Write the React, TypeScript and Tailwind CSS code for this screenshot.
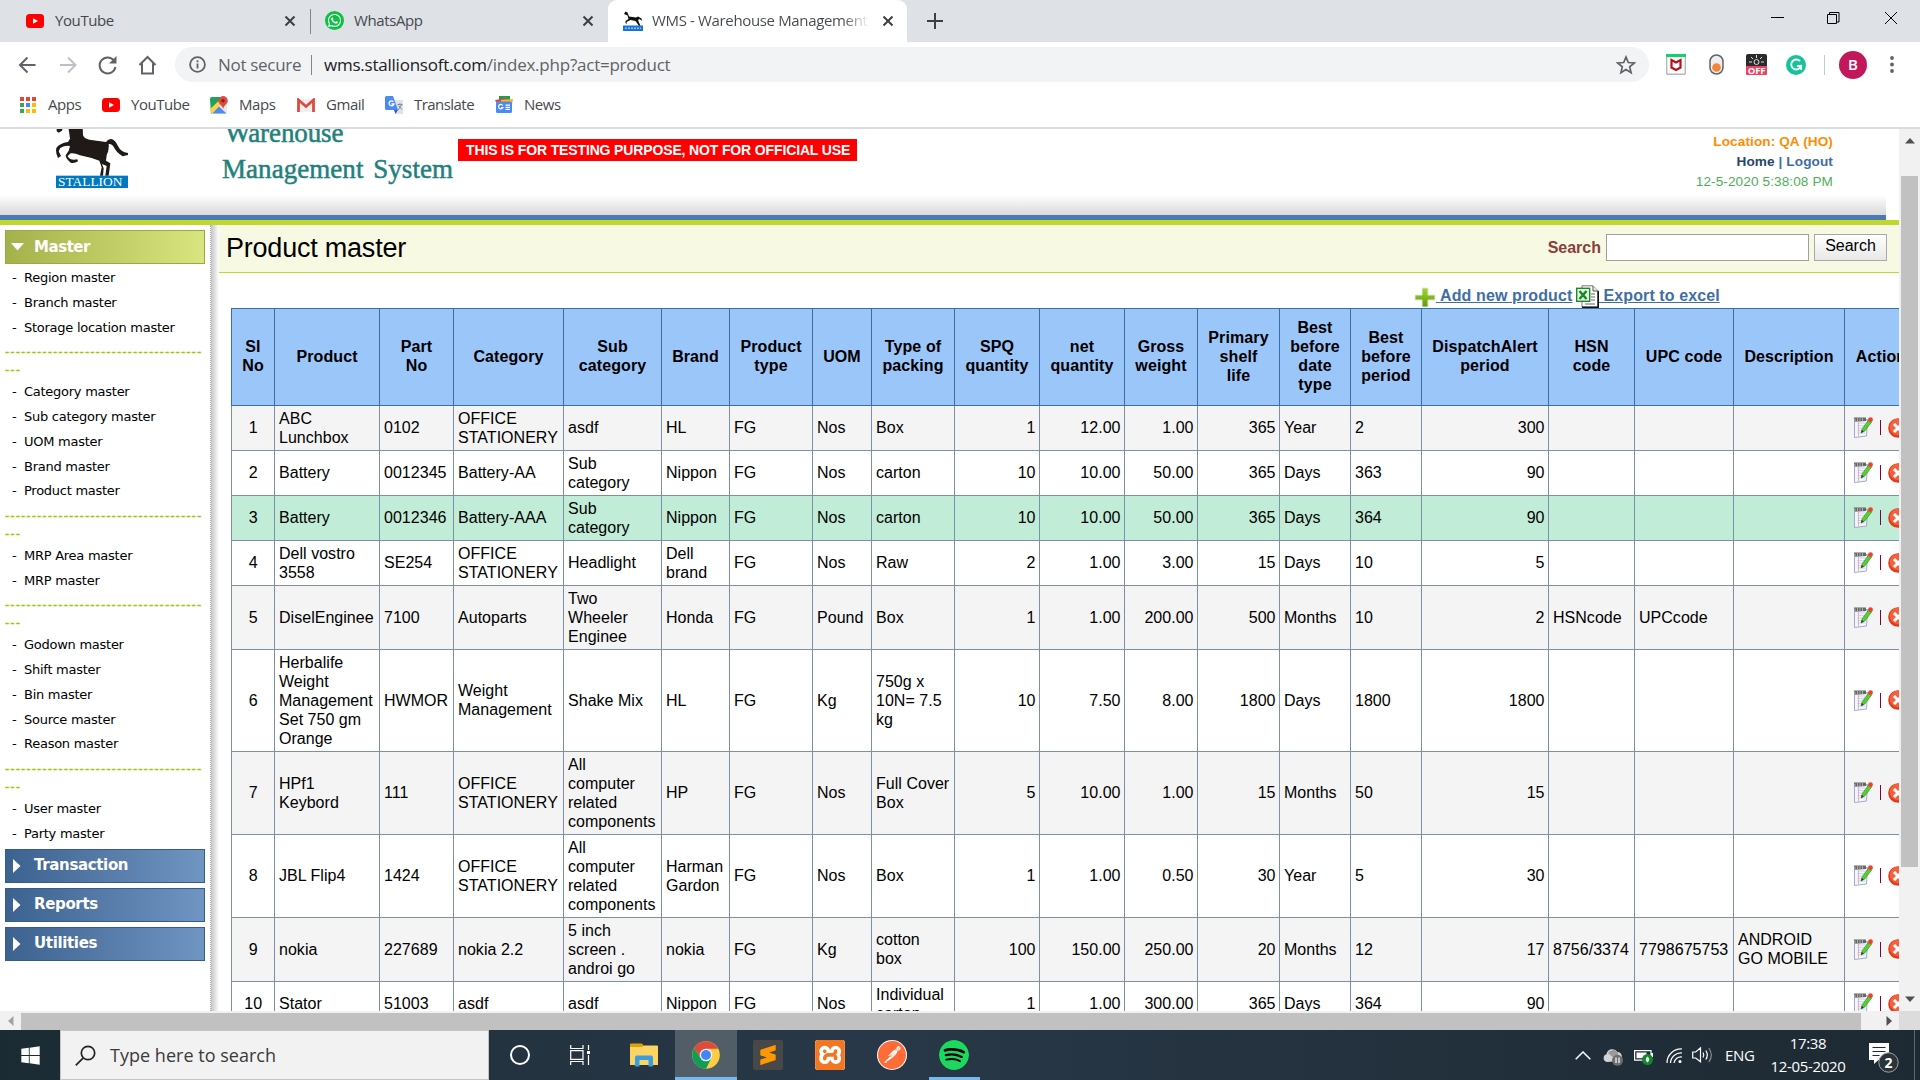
import React from "react";
import { FaWindows, FaWhatsapp } from "react-icons/fa";
import { SiSublimetext, SiXampp, SiPostman, SiSpotify } from "react-icons/si";

const UI = "font-['Open_Sans','Noto_Sans',sans-serif]";

/* ---------- small drawings ---------- */

function YouTubeIcon() {
  return (
    <svg width="18" height="14" viewBox="0 0 18 14">
      <rect width="18" height="14" rx="3.5" fill="#f00" />
      <path d="M7 4.2v5.6L12 7z" fill="#fff" />
    </svg>
  );
}

const HORSE =
  "M205 20H248L249 46Q254 57 268 59L318 66Q326 55 337 58Q346 62 354 78Q362 96 384 99V105L368 109Q350 98 343 84Q336 70 326 72Q328 90 320 106L318 122L331 130L326 167H316L320 138L306 132L311 145L309 167H300L305 142L298 122Q270 112 240 106Q224 98 212 100L203 108Q208 122 232 118L234 124Q222 132 212 128Q198 118 197 106L206 92L210 78Q194 76 181 84L176 94L183 108L174 114Q166 100 169 84Q178 70 204 66L210 56ZM170 20H190L186 32L176 38L170 34Z";

function StallionLogo() {
  return (
    <svg width="72" height="59" viewBox="168 27 216 177">
      <path d={HORSE} fill="#1f1a17" />
      <rect x="168" y="167" width="216" height="37" fill="#0079c1" />
      <text x="174" y="198" textLength="193" lengthAdjust="spacingAndGlyphs" fontSize="38" fontFamily="Liberation Serif, serif" fill="#fff">
        STALLION
      </text>
    </svg>
  );
}

function StallionFavicon() {
  return (
    <svg width="20" height="20" viewBox="0 0 20 20">
      <path d="M1 3L2.500 .5l2 1 1.500 4 7 1 2-1 3.500 2 .5 2.500-2.500-2-1.500 1 2.500 6h-1.500l-3.500-5-5-1-4 2 .5 2-1.500-1V10l3-2-1-3.500z" fill="#111" />
      <rect y="14.500" width="20" height="5.500" fill="#1a73d9" />
      <path d="M2 17.300h16" stroke="#8fc0f5" strokeWidth="1.500" strokeDasharray="2 1" />
    </svg>
  );
}

function CloseX() {
  return (
    <svg width="12" height="12" viewBox="0 0 12 12">
      <path d="M1.500 1.500l9 9M10.500 1.500l-9 9" stroke="#3c4043" strokeWidth="2" />
    </svg>
  );
}

function EditIcon() {
  return (
    <svg width="20" height="21" viewBox="0 0 20 21" className="shrink-0">
      <path d="M1.500 3L14.500 2.500 13.500 19 1.500 20.500z" fill="#f4f6fd" stroke="#9aa0cf" strokeWidth="0.9" />
      <path d="M4.500 6h8M4.300 8.500h8M4.300 11h7M4.300 13.500h7M4.300 16h8" stroke="#c4cbe8" strokeWidth="0.8" />
      <path d="M5.500 5v14.500" stroke="#eda0a0" strokeWidth="0.8" />
      <path d="M.8 .5h12l.5 3.500-11.500.8z" fill="#666" />
      <path d="M2 1.500v3M4.500 1v3.500M7 1v3M9.500 1v3" stroke="#ccc" strokeWidth="0.7" />
      <path d="M8 16l1.200-4.300L15.800 2.800l2.800 2.200-6.800 9z" fill="#5ecb34" stroke="#2d9a1c" strokeWidth="0.7" />
      <path d="M8 16l.8-3 2 1.600z" fill="#333" />
      <circle cx="17.500" cy="2.700" r="2.400" fill="#e8432c" />
    </svg>
  );
}

function DeleteIcon() {
  return (
    <svg width="20" height="20" viewBox="0 0 20 20" className="shrink-0">
      <circle cx="10" cy="10" r="9.800" fill="#e23a1c" />
      <circle cx="10" cy="9" r="8.300" fill="#f5603f" />
      <path d="M6 6l8 8M14 6l-8 8" stroke="#fff" strokeWidth="3" />
    </svg>
  );
}

function PlusIcon() {
  return (
    <svg width="22" height="21" viewBox="0 0 22 21">
      <defs>
        <linearGradient id="plusFill" x1="0" y1="0" x2="0" y2="1">
          <stop offset="0" stopColor="#a4d42c" />
          <stop offset="1" stopColor="#5c9c10" />
        </linearGradient>
      </defs>
      <path d="M8 1h6v7h7v5h-7v7H8v-7H1V8h7z" fill="url(#plusFill)" stroke="#e4e8dc" strokeWidth="1" />
    </svg>
  );
}

function ExcelIcon() {
  return (
    <svg width="23" height="23" viewBox="0 0 23 23">
      <path d="M6 .8h11l5 5v16.400H6z" fill="#fff" stroke="#777" strokeWidth="1" />
      <path d="M6 22.200h16.200V6" fill="none" stroke="#111" strokeWidth="1.600" />
      <path d="M17 1v5h5" fill="#eee" stroke="#555" strokeWidth="1" />
      <path d="M9 19h10M15 9h4M15 12h4M15 15h4" stroke="#9a9a9a" strokeWidth="1.300" />
      <rect x=".7" y="3.300" width="13" height="13" fill="#e9f5e6" stroke="#1a8a28" strokeWidth="1.400" />
      <path d="M3.500 6l7 8M10.500 6l-7 8" stroke="#138a22" strokeWidth="2.500" />
    </svg>
  );
}

function ChromeIcon() {
  return (
    <svg width="28" height="28" viewBox="0 0 28 28">
      <circle cx="14" cy="14" r="13.800" fill="#ffcd40" />
      <path d="M14 .2A13.800 13.800 0 0 1 26 7.800H14L8.600 17 2.050 7.100A13.800 13.800 0 0 1 14 .2z" fill="#dd4b3e" />
      <path d="M2.050 7.100A13.800 13.800 0 0 0 14 27.800L19.400 17.100 8.600 17.100z" fill="#0f9d58" />
      <circle cx="14" cy="14" r="6.300" fill="#f1f1f1" />
      <circle cx="14" cy="14" r="5" fill="#4285f4" />
    </svg>
  );
}

/* ---------- browser chrome ---------- */

function TabStrip() {
  return (
    <div className={`flex h-[42px] w-full shrink-0 items-center bg-[#dee1e6] text-[15px] tracking-[-0.4px] text-[#45494d] ${UI}`}>
      <div className="flex h-full w-[310px] items-center pb-px pl-[26px]">
        <YouTubeIcon />
        <span className="ml-[11px] w-[229px]">YouTube</span>
        <CloseX />
      </div>
      <div className="h-[25px] w-px bg-[#80868b]" />
      <div className="flex h-full w-[297px] items-center pb-px pl-[14px]">
        <span className="flex size-[19px] items-center justify-center rounded-full bg-[#0cc143] text-white">
          <FaWhatsapp size={15} />
        </span>
        <span className="ml-[10px] w-[228px]">WhatsApp</span>
        <CloseX />
      </div>
      <div className="flex h-full w-[299px] items-center rounded-t-[9px] bg-white pb-px pl-[15px]">
        <StallionFavicon />
        <span className="ml-[9px] w-[217px] overflow-hidden whitespace-nowrap bg-linear-to-r from-[#45494d] from-88% to-transparent bg-clip-text tracking-[-0.35px] text-transparent">
          WMS - Warehouse Management
        </span>
        <span className="ml-[13px]">
          <CloseX />
        </span>
      </div>
      <svg className="ml-5" width="16" height="16" viewBox="0 0 16 16">
        <path d="M8 0v16M0 8h16" stroke="#3c4043" strokeWidth="2" />
      </svg>
      <div className="ml-auto flex items-center pr-[22px] pb-1.5">
        <svg width="128" height="14" viewBox="0 0 128 14" fill="none" stroke="#000" strokeWidth="1">
          <path d="M1 6.500h13" />
          <path d="M57.500 3.500h9v9h-9zM59.500 3v-1.500h9.500v9.500h-2" />
          <path d="M115 1l12 12M127 1l-12 12" />
        </svg>
      </div>
    </div>
  );
}

function Toolbar() {
  return (
    <div className={`flex h-[45px] w-full shrink-0 items-center bg-white ${UI}`}>
      <svg width="175" height="24" viewBox="0 0 175 24" fill="none" stroke="#5f6368" strokeWidth="2">
        <path d="M35.500 12H20.500M27.500 4.500L20 12l7.500 7.500" />
        <path d="M60 12h15M68 4.500l7.500 7.500-7.500 7.500" stroke="#bdc1c6" />
        <path d="M114 7.500A8 8 0 1 0 115.500 14" />
        <path d="M116.500 3v7.500h-7.500z" fill="#5f6368" stroke="none" />
        <path d="M139.500 12l8-8 8 8M142 10.500V20.500h11V10.500" />
      </svg>
      <div className="flex h-[35px] w-[1474px] items-center rounded-full bg-[#f1f3f4] pl-[14px] text-[17px] tracking-[-0.3px] whitespace-nowrap">
        <svg width="17" height="17" viewBox="0 0 17 17">
          <circle cx="8.500" cy="8.500" r="7.400" fill="none" stroke="#5f6368" strokeWidth="1.800" />
          <path d="M8.500 7.500v5M8.500 4.300v2" stroke="#5f6368" strokeWidth="1.800" />
        </svg>
        <span className="ml-3 w-[93px] text-[#5f6368]">Not secure</span>
        <span className="mr-[12px] h-[20px] w-px bg-[#80868b]" />
        <span className="tracking-[-0.23px] text-[#5f6368]">
          <span className="text-[#202124]">wms.stallionsoft.com</span>/index.php?act=product
        </span>
        <svg className="mr-[13px] ml-auto" width="20" height="20" viewBox="0 0 20 20">
          <path d="M10 2l2.300 5.500 6 .5-4.600 3.900 1.400 5.800L10 14.600l-5.100 3.100 1.400-5.800L1.700 8l6-.5z" fill="none" stroke="#5f6368" strokeWidth="1.700" />
        </svg>
      </div>
      <div className="flex items-center">
        <svg className="ml-[17px]" width="20" height="21" viewBox="0 0 20 21">
          <rect x=".7" y=".7" width="18.600" height="19.600" rx="1" fill="#fff" stroke="#b8b8b8" strokeWidth="1.400" />
          <path d="M0 0h20v3H0z" fill="#0fd46a" />
          <path d="M5.500 6l4.500 2.500L14.500 6v7.500L10 16l-4.500-2.500z" fill="#fff" stroke="#b5121b" strokeWidth="2.200" />
        </svg>
        <svg className="ml-[23px]" width="15" height="21" viewBox="0 0 15 21">
          <rect x="1" y="1" width="13" height="19" rx="6.500" fill="#eee" stroke="#5f6368" strokeWidth="1.500" />
          <circle cx="7.500" cy="13.500" r="4.300" fill="#f58536" />
        </svg>
        <span className="ml-[22px] flex h-[21px] w-[21px] flex-col items-center overflow-hidden rounded-[2px] bg-[#2b2b2b]">
          <svg width="21" height="12" viewBox="0 0 21 12" fill="none" stroke="#ddd" strokeWidth="1" className="shrink-0">
            <circle cx="10.500" cy="8" r="2.500" />
            <path d="M10.500 1v3M3 8h3M15 8h3M5 3l2 2M16 3l-2 2" />
          </svg>
          <span className="h-[9px] w-full bg-[#f5405f] text-center text-[9.5px] leading-[9px] font-bold tracking-[-0.2px] text-white">OFF</span>
        </span>
        <span className="ml-[19px] flex size-5 items-center justify-center rounded-full bg-[#15c39a]">
          <svg width="14" height="14" viewBox="0 0 14 14" fill="none" stroke="#fff" strokeWidth="1.800">
            <path d="M11 3.200A5 5 0 1 0 12 8H8M12.200 6.800V12" />
          </svg>
        </span>
        <span className="ml-[18px] h-[20px] w-px bg-[#c6c9cc]" />
        <span className="ml-[14px] flex size-[28px] items-center justify-center rounded-full bg-[#c2185b] text-[15px] font-semibold text-white">B</span>
        <svg className="ml-[23px]" width="4" height="17" viewBox="0 0 4 17" fill="#5f6368">
          <circle cx="2" cy="2" r="1.900" />
          <circle cx="2" cy="8.500" r="1.900" />
          <circle cx="2" cy="15" r="1.900" />
        </svg>
      </div>
    </div>
  );
}

function BookmarksBar() {
  return (
    <div className={`flex h-[42px] w-full shrink-0 items-center border-b-2 border-[#dadce0] bg-white pb-[5px] pl-5 text-[15px] tracking-[-0.45px] whitespace-nowrap text-[#45494d] ${UI}`}>
      <svg width="16" height="16" viewBox="0 0 16 16">
        <path d="M0 0h4v4H0zM6 0h4v4H6zM12 0h4v4h-4z" fill="#ea4335" />
        <path d="M0 6h4v4H0zM0 12h4v4H0z" fill="#34a853" />
        <path d="M6 6h4v4H6z" fill="#4285f4" />
        <path d="M6 12h4v4H6zM12 6h4v4h-4zM12 12h4v4h-4z" fill="#fbbc04" />
      </svg>
      <span className="ml-3 w-[54px]">Apps</span>
      <YouTubeIcon />
      <span className="ml-[11px] w-[79px]">YouTube</span>
      <svg width="18" height="18" viewBox="0 0 18 18">
        <rect y="1" width="17" height="17" rx="2" fill="#e8eaed" />
        <path d="M0 3a2 2 0 0 1 2-2h8v8L1 17z" fill="#1fa15d" />
        <path d="M1 17.500L8.500 10l8 7.500z" fill="#4c8bf5" />
        <path d="M0 13l13-12 2 3L2 18z" fill="#ffd04b" />
        <path d="M13 0a4.800 4.800 0 0 1 4.800 4.800C17.800 8 14 9 13.200 13 12 9 8.300 8 8.300 4.800A4.800 4.800 0 0 1 13 0z" fill="#dd4b3e" />
        <circle cx="13" cy="4.800" r="1.700" fill="#822219" />
      </svg>
      <span className="ml-[11px] w-[58px]">Maps</span>
      <svg width="18" height="14" viewBox="0 0 18 14">
        <path d="M1 1h16v13H1z" fill="#f0f0f0" />
        <path d="M1.500 14V2L9 8.500 16.500 2v12" fill="none" stroke="#dd4b3e" strokeWidth="2.800" />
      </svg>
      <span className="ml-[11px] w-[59px]">Gmail</span>
      <svg width="19" height="18" viewBox="0 0 19 18">
        <path d="M7 4h11v14H11z" fill="#dfe3e8" />
        <path d="M0 1.500A1.500 1.500 0 0 1 1.500 0H8l5 14H1.500A1.500 1.500 0 0 1 0 12.500z" fill="#4a8af4" />
        <path d="M9 14h4l-2.500 4z" fill="#3055c4" />
        <path d="M8.500 5.700A2.500 2.500 0 1 0 9 8H6.500" fill="none" stroke="#fff" strokeWidth="1.300" />
        <path d="M12.500 8.500h5M15 7v1.500M16.500 9l-3.500 5M13.500 9.500l3.500 4" stroke="#78909c" strokeWidth="1" fill="none" />
      </svg>
      <span className="ml-[10px] w-[81px] tracking-[-0.55px]">Translate</span>
      <svg width="18" height="17" viewBox="0 0 18 17">
        <path d="M4 0h11v6H4z" fill="#1d9b57" />
        <path d="M0 4l12-2 1 4H1z" fill="#e8453c" />
        <path d="M6 4l12-1-1 6H6z" fill="#fbb917" />
        <rect x="1" y="5.500" width="16" height="11.500" rx="1.500" fill="#4a8af4" />
        <path d="M7.800 9.300A2.300 2.300 0 1 0 8 11.500H6M10.500 9.200H15M10.500 11.300H15M10.500 13.400H15" fill="none" stroke="#fff" strokeWidth="1.200" />
      </svg>
      <span className="ml-[11px]">News</span>
    </div>
  );
}

/* ---------- page ---------- */

function PageHeader() {
  return (
    <div className="flex h-[96px] w-full shrink-0 flex-col">
      <div className="flex h-[66px] w-full items-start overflow-hidden">
        <div className="ml-14 w-[166px] shrink-0">
          <StallionLogo />
        </div>
        <div className="-mt-[14px] w-[236px] shrink-0 font-['Liberation_Serif',serif] text-[27px] leading-[36px] whitespace-nowrap text-[#22807c] [-webkit-text-stroke:0.5px_#22807c]">
          <div className="pl-[3px] tracking-[-0.1px]">Warehouse</div>
          <div className="tracking-[0.05px] [word-spacing:3px]">Management System</div>
        </div>
        <div className="mt-[10px] h-[22px] w-[399px] bg-[#f00] pl-[8px] text-[14px] leading-[22px] font-bold tracking-[-0.14px] whitespace-nowrap text-white">
          THIS IS FOR TESTING PURPOSE, NOT FOR OFFICIAL USE
        </div>
        <div className="mr-[66px] ml-auto pt-[3px] text-right text-[13.6px] leading-[20px] tracking-[0.1px]">
          <div className="font-bold text-[#ff8c00]">Location: QA (HO)</div>
          <div className="font-bold text-[#3e6da6]">
            <span className="text-[#24466b]">Home</span> | Logout
          </div>
          <div className="text-[#4db058]">12-5-2020 5:38:08 PM</div>
        </div>
      </div>
      <div className="h-[20px] w-[1886px] bg-linear-to-b from-white to-[#d9d9d9]" />
      <div className="h-[5px] w-[1886px] bg-[#4a7cb3]" />
      <div className="h-[5px] w-full bg-[#c1d72e]" />
    </div>
  );
}

const MENU = [
  ["Region master", "Branch master", "Storage location master"],
  ["Category master", "Sub category master", "UOM master", "Brand master", "Product master"],
  ["MRP Area master", "MRP master"],
  ["Godown master", "Shift master", "Bin master", "Source master", "Reason master"],
  ["User master", "Party master"],
];

function Separator() {
  return (
    <div className="h-[39.9px] pt-[3.6px] text-[12px] leading-[18px] tracking-[1px] text-[#99cc00] [-webkit-text-stroke:0.3px_#99cc00]">
      <div>-------------------------------------</div>
      <div>---</div>
    </div>
  );
}

function ClosedSection({ label }: { label: string }) {
  return (
    <div className="mb-[5px] flex h-[34px] w-[200px] items-center border border-[#345c8c] bg-linear-to-r from-[#3c628f] to-[#7195c2] pl-[7px] text-[15px] font-bold text-white">
      <svg width="8" height="14" viewBox="0 0 8 14">
        <path d="M0 0l7.500 7L0 14z" fill="#fff" />
      </svg>
      <span className="ml-[13px] tracking-[-0.35px]">{label}</span>
    </div>
  );
}

function Sidebar() {
  return (
    <div className="flex w-[210px] shrink-0 flex-col overflow-hidden pt-[5px] pl-[5px] font-['DejaVu_Sans',sans-serif] whitespace-nowrap">
      <div className="flex h-[34px] w-[200px] shrink-0 items-center border-[1.5px] border-[#9ba944] bg-linear-to-r from-[#a5b24c] to-[#d9e67f] pl-[5px] text-[15px] font-bold text-white">
        <svg width="13" height="8" viewBox="0 0 13 8">
          <path d="M0 0h13L6.500 7.500z" fill="#fff" />
        </svg>
        <span className="ml-[10px] tracking-[-0.45px]">Master</span>
      </div>
      <div className="pt-[1.5px] pb-[2.900px]">
        {MENU.map((group, g) => (
          <div key={g}>
            {g > 0 && <Separator />}
            {group.map((m) => (
              <div key={m} className="flex h-[24.760px] items-center pl-[7px] text-[13px] text-black">
                <span className="w-3">-</span>
                <span className="tracking-[-0.26px]">{m}</span>
              </div>
            ))}
          </div>
        ))}
      </div>
      <ClosedSection label="Transaction" />
      <ClosedSection label="Reports" />
      <ClosedSection label="Utilities" />
    </div>
  );
}

const COLS = [43, 105, 74, 110, 98, 68, 83, 59, 83, 85, 85, 73, 82, 71, 71, 127, 86, 99, 111, 73];
const HEADS = [
  "Sl\nNo", "Product", "Part\nNo", "Category", "Sub\ncategory", "Brand", "Product\ntype", "UOM", "Type of\npacking",
  "SPQ\nquantity", "net\nquantity", "Gross\nweight", "Primary\nshelf\nlife", "Best\nbefore\ndate\ntype",
  "Best\nbefore\nperiod", "DispatchAlert\nperiod", "HSN\ncode", "UPC code", "Description", "Action",
];
const RIGHT = [9, 10, 11, 12, 15];

const ROWS: { h: number; c: string[] }[] = [
  { h: 45, c: ["1", "ABC\nLunchbox", "0102", "OFFICE\nSTATIONERY", "asdf", "HL", "FG", "Nos", "Box", "1", "12.00", "1.00", "365", "Year", "2", "300", "", "", ""] },
  { h: 45, c: ["2", "Battery", "0012345", "Battery-AA", "Sub\ncategory", "Nippon", "FG", "Nos", "carton", "10", "10.00", "50.00", "365", "Days", "363", "90", "", "", ""] },
  { h: 45, c: ["3", "Battery", "0012346", "Battery-AAA", "Sub\ncategory", "Nippon", "FG", "Nos", "carton", "10", "10.00", "50.00", "365", "Days", "364", "90", "", "", ""] },
  { h: 45, c: ["4", "Dell vostro\n3558", "SE254", "OFFICE\nSTATIONERY", "Headlight", "Dell\nbrand", "FG", "Nos", "Raw", "2", "1.00", "3.00", "15", "Days", "10", "5", "", "", ""] },
  { h: 64, c: ["5", "DiselEnginee", "7100", "Autoparts", "Two\nWheeler\nEnginee", "Honda", "FG", "Pound", "Box", "1", "1.00", "200.00", "500", "Months", "10", "2", "HSNcode", "UPCcode", ""] },
  { h: 102, c: ["6", "Herbalife\nWeight\nManagement\nSet 750 gm\nOrange", "HWMOR", "Weight\nManagement", "Shake Mix", "HL", "FG", "Kg", "750g x\n10N= 7.5\nkg", "10", "7.50", "8.00", "1800", "Days", "1800", "1800", "", "", ""] },
  { h: 83, c: ["7", "HPf1\nKeybord", "111", "OFFICE\nSTATIONERY", "All\ncomputer\nrelated\ncomponents", "HP", "FG", "Nos", "Full Cover\nBox", "5", "10.00", "1.00", "15", "Months", "50", "15", "", "", ""] },
  { h: 83, c: ["8", "JBL Flip4", "1424", "OFFICE\nSTATIONERY", "All\ncomputer\nrelated\ncomponents", "Harman\nGardon", "FG", "Nos", "Box", "1", "1.00", "0.50", "30", "Year", "5", "30", "", "", ""] },
  { h: 64, c: ["9", "nokia", "227689", "nokia 2.2", "5 inch\nscreen .\nandroi go", "nokia", "FG", "Kg", "cotton\nbox", "100", "150.00", "250.00", "20", "Months", "12", "17", "8756/3374", "7798675753", "ANDROID\nGO MOBILE"] },
  { h: 45, c: ["10", "Stator", "51003", "asdf", "asdf", "Nippon", "FG", "Nos", "Individual\ncarton", "1", "1.00", "300.00", "365", "Days", "364", "90", "", "", ""] },
];

function ProductTable() {
  return (
    <table className="w-[1686px] table-fixed border-collapse text-[16px] leading-[19px] whitespace-pre text-black">
      <colgroup>
        {COLS.map((w, i) => (
          <col key={i} style={{ width: w }} />
        ))}
      </colgroup>
      <thead>
        <tr className="h-[97px] bg-[#9ac6f9]">
          {HEADS.map((h) => (
            <th key={h} className="border border-[#3a6ea5] px-0 pt-0 pb-[2px] text-center align-middle font-bold tracking-[0.1px]">
              {h}
            </th>
          ))}
        </tr>
      </thead>
      <tbody>
        {ROWS.map((r, i) => (
          <tr key={i} style={{ height: r.h }} className={i === 2 ? "bg-[#c1ecd7]" : i % 2 ? "bg-white" : "bg-[#f4f4f4]"}>
            {r.c.map((t, j) => (
              <td
                key={j}
                className={`border border-[#7b8fa8] pt-0 pr-[3.500px] pb-px pl-[4px] align-middle tracking-[0.03px] ${j === 0 ? "text-center" : RIGHT.includes(j) ? "text-right" : "text-left"}`}
              >
                {t}
              </td>
            ))}
            <td className="border border-[#7b8fa8] px-0 pt-0 pb-px align-middle">
              <div className="flex items-center pl-[7.500px]">
                <EditIcon />
                <span className="mx-[7px] h-[15px] w-px bg-[#800040]" />
                <DeleteIcon />
              </div>
            </td>
          </tr>
        ))}
      </tbody>
    </table>
  );
}

function Content() {
  return (
    <div className="flex h-full w-[1680px] shrink-0 flex-col overflow-hidden">
      <div className="flex h-[48px] shrink-0 items-start border-b border-[#c1d72e] bg-[#f8f9e3] pl-[7px]">
        <h1 className="pt-[6px] text-[27px] leading-[34px] tracking-[-0.22px] text-black">Product master</h1>
        <div className="mr-3 ml-auto flex items-center pt-[9px]">
          <label className="mr-[5px] text-[16px] font-bold text-[#8b3e3a]">Search</label>
          <div className="h-[27px] w-[203px] border border-[#a0a0a0] bg-white" />
          <button className="ml-[5px] h-[27px] w-[73px] border border-[#a8a8a8] bg-linear-to-b from-white to-[#e8e8e8] pb-1 text-[16px] leading-[20px] text-black">Search</button>
        </div>
      </div>
      <div className="flex h-[35px] shrink-0 items-start pl-[1195px] text-[16px] leading-[20px] font-bold whitespace-pre text-[#3f6ea6]">
        <span className="mt-[14px]">
          <PlusIcon />
        </span>
        <span className="mt-[13px] w-[140px]">
          <span className="tracking-[0.12px] underline"> Add new product</span>
        </span>
        <span className="mt-[12px]">
          <ExcelIcon />
        </span>
        <span className="mt-[13px] tracking-[0.1px] underline"> Export to excel</span>
      </div>
      <div className="pl-[12px]">
        <ProductTable />
      </div>
    </div>
  );
}

function Arrow({ d, fill }: { d: string; fill: string }) {
  return (
    <svg width="10" height="10" viewBox="0 0 10 10" className="shrink-0">
      <path d={d} fill={fill} />
    </svg>
  );
}

function BrowserViewport() {
  return (
    <div className="flex h-[901px] w-full shrink-0 flex-col bg-white font-['Liberation_Sans',Arial,sans-serif]">
      <div className="flex h-[882px] w-full shrink-0">
        <div className="flex h-full w-[1899px] shrink-0 flex-col overflow-hidden">
          <PageHeader />
          <div className="flex min-h-0 flex-1">
            <Sidebar />
            <div className="w-[9px] shrink-0 border-l border-dotted border-[#aaa] bg-linear-to-r from-[#c4c4c4] to-white" />
            <Content />
          </div>
        </div>
        <div className="flex h-full w-[21px] shrink-0 flex-col items-center bg-[#f1f1f1]">
          <div className="flex h-[47px] items-start pt-[7px]">
            <Arrow d="M0 7.500h10L5 2z" fill="#505050" />
          </div>
          <div className="h-[691px] w-[17px] bg-[#c1c1c1]" />
          <div className="mt-auto pb-[7px]">
            <Arrow d="M0 2.500h10L5 8z" fill="#505050" />
          </div>
        </div>
      </div>
      <div className="flex h-[19px] w-full items-center bg-[#f1f1f1]">
        <div className="flex w-[21px] pl-[6px]">
          <Arrow d="M7.500 0v10L2 5z" fill="#a3a3a3" />
        </div>
        <div className="mt-[2px] h-[17px] w-[1840px] bg-[#c1c1c1]" />
        <div className="flex w-[38px] justify-end pr-[5px]">
          <Arrow d="M2.500 0v10L8 5z" fill="#505050" />
        </div>
        <div className="h-full w-[21px] bg-[#dcdcdc]" />
      </div>
    </div>
  );
}

/* ---------- taskbar ---------- */

function TaskCell({ children, active, running }: { children: React.ReactNode; active?: boolean; running?: boolean }) {
  return (
    <div className={`flex h-full w-[62px] flex-col items-center ${active ? "bg-[#515e68]" : ""}`}>
      <div className="flex h-[47px] items-center pt-[3px]">{children}</div>
      {active && <div className="h-[3px] w-full bg-[#76b9ed]" />}
      {running && <div className="h-[3px] w-[51px] bg-[#76b9ed]" />}
    </div>
  );
}

function Taskbar() {
  return (
    <div className={`flex h-[50px] w-full shrink-0 items-center bg-linear-to-r from-[#1b2b33] via-[#293848] via-45% to-[#1d2a33] ${UI}`}>
      <div className="flex h-full w-[60px] items-center justify-center text-white">
        <FaWindows size={21} />
      </div>
      <div className="flex h-full w-[429px] items-center border border-[#c4c4c4] bg-[#f2f2f2] pl-[14px]">
        <svg width="21" height="21" viewBox="0 0 21 21" fill="none" stroke="#222" strokeWidth="1.700">
          <circle cx="13" cy="8" r="6.700" />
          <path d="M8.300 12.800L.8 20.300" />
        </svg>
        <span className="ml-[14px] text-[18px] tracking-[0.02px] whitespace-nowrap text-[#3a3a3a]">Type here to search</span>
      </div>
      <div className="flex h-full">
        <TaskCell>
          <div className="size-[20px] rounded-full border-[2.500px] border-white" />
        </TaskCell>
        <TaskCell>
          <svg className="-ml-[4px]" width="21" height="20" viewBox="0 0 21 20" fill="none" stroke="#fff" strokeWidth="1.200">
            <path d="M.7 0v3.500H13V0M.7 20v-3.500H13V20M.7 5.700H13v8.600H.7zM18.500 0v5M18.500 10v10" />
            <path d="M17 6h3v3h-3z" fill="#fff" stroke="none" />
          </svg>
        </TaskCell>
        <TaskCell>
          <svg width="28" height="24" viewBox="0 0 28 24">
            <path d="M0 1.500A1 1 0 0 1 1 .5h11l2 2.500h13.500V8H0z" fill="#e0a106" />
            <path d="M0 4h12l2-1.500h13a1 1 0 0 1 1 1V22H0z" fill="#fcd462" />
            <path d="M5 23.500V14.500a2 2 0 0 1 2-2h14a2 2 0 0 1 2 2v9h-4.500V17h-9v6.500z" fill="#3d9be0" />
          </svg>
        </TaskCell>
        <TaskCell active>
          <ChromeIcon />
        </TaskCell>
        <TaskCell>
          <span className="flex size-[30px] items-center justify-center rounded-[2px] bg-[#484848] text-[#ff9800]">
            <SiSublimetext size={20} />
          </span>
        </TaskCell>
        <TaskCell>
          <span className="flex size-[30px] items-center justify-center rounded-[3px] bg-white text-[#f37623]">
            <SiXampp size={30} />
          </span>
        </TaskCell>
        <TaskCell>
          <span className="flex size-[30px] items-center justify-center rounded-full bg-white text-[#ff6c37]">
            <SiPostman size={28} />
          </span>
        </TaskCell>
        <TaskCell running>
          <span className="flex size-[30px] items-center justify-center rounded-full bg-black text-[#1ed760]">
            <SiSpotify size={30} />
          </span>
        </TaskCell>
      </div>
      <div className="ml-auto flex h-full items-center text-white">
        <svg width="16" height="9" viewBox="0 0 16 9" fill="none" stroke="#fff" strokeWidth="1.500">
          <path d="M.7 8.300L8 1l7.300 7.300" />
        </svg>
        <svg className="mt-1 ml-[12px]" width="20" height="18" viewBox="0 0 20 18">
          <path d="M4 14a4 4 0 0 1-.5-7.800A6 6 0 0 1 14.500 4 5 5 0 0 1 17 13z" fill="#d4d4d4" />
          <path d="M5 5A6 6 0 0 1 14.500 4l1 3-6 2z" fill="#9a9a9a" />
          <circle cx="14.500" cy="12.300" r="5.500" fill="#6e6e6e" />
          <path d="M13 9.500v5.500M16 9.500v5.500" stroke="#fff" strokeWidth="1.200" />
        </svg>
        <svg className="mt-1 ml-[11px]" width="20" height="16" viewBox="0 0 20 16">
          <path d="M.6 1.600h16.400v9.500H.6z" fill="none" stroke="#fff" strokeWidth="1.200" />
          <path d="M2.500 3.500h10v5.700h-10z" fill="#fff" />
          <path d="M17 4h2v4h-2z" fill="#fff" />
          <circle cx="13.500" cy="10.500" r="5.500" fill="#118a2c" />
          <path d="M13.500 7.500q3.500 3-0 6q-3.500-3 0-6z" fill="#fff" />
        </svg>
        <svg className="mt-0.5 ml-[12px]" width="17" height="16" viewBox="0 0 17 16" fill="none" stroke="#fff" strokeWidth="1.200">
          <path d="M1 15A14 14 0 0 1 16 1M4.500 15A10.500 10.500 0 0 1 16 5M8 15a7 7 0 0 1 8-6" />
          <circle cx="14" cy="13.500" r="1.500" fill="#fff" stroke="none" />
        </svg>
        <svg className="ml-[9px]" width="21" height="18" viewBox="0 0 21 18" fill="none" stroke="#fff" strokeWidth="1.200">
          <path d="M.7 6h3L8.500 1.800v14L3.700 12h-3zM11 6.500q1.500 2.500 0 5M13.800 4.500q3 4.500 0 9" />
          <path d="M16.800 2q5 7 0 14" stroke="#85919a" />
        </svg>
        <span className="ml-[12px] w-[45px] text-[15px] tracking-[-0.3px]">ENG</span>
        <div className="w-[76px] pb-px text-center text-[15px] leading-[23px] tracking-[-0.35px] whitespace-nowrap">
          <div>17:38</div>
          <div>12-05-2020</div>
        </div>
        <svg className="mt-[5px] ml-[23px]" width="30" height="31" viewBox="0 0 30 31">
          <path d="M0 1h20v17H9.500L5 22v-4H0z" fill="#fff" />
          <path d="M3.500 5.500h13M3.500 9.500h13M3.500 13.500h7" stroke="#1f2c36" strokeWidth="1.200" />
          <circle cx="19.500" cy="20.500" r="9.700" fill="#2a3439" stroke="#9aa3a8" strokeWidth="1" />
          <text x="19.500" y="25.500" textAnchor="middle" fontSize="14" fontWeight="700" fill="#fff" fontFamily="Open Sans, sans-serif">
            2
          </text>
        </svg>
        <div className="mr-[5px] ml-[15px] h-full w-px bg-[#5b666e]" />
      </div>
    </div>
  );
}

export default function App() {
  return (
    <div className="flex h-[1080px] w-[1920px] flex-col overflow-hidden bg-white">
      <TabStrip />
      <Toolbar />
      <BookmarksBar />
      <BrowserViewport />
      <Taskbar />
    </div>
  );
}
